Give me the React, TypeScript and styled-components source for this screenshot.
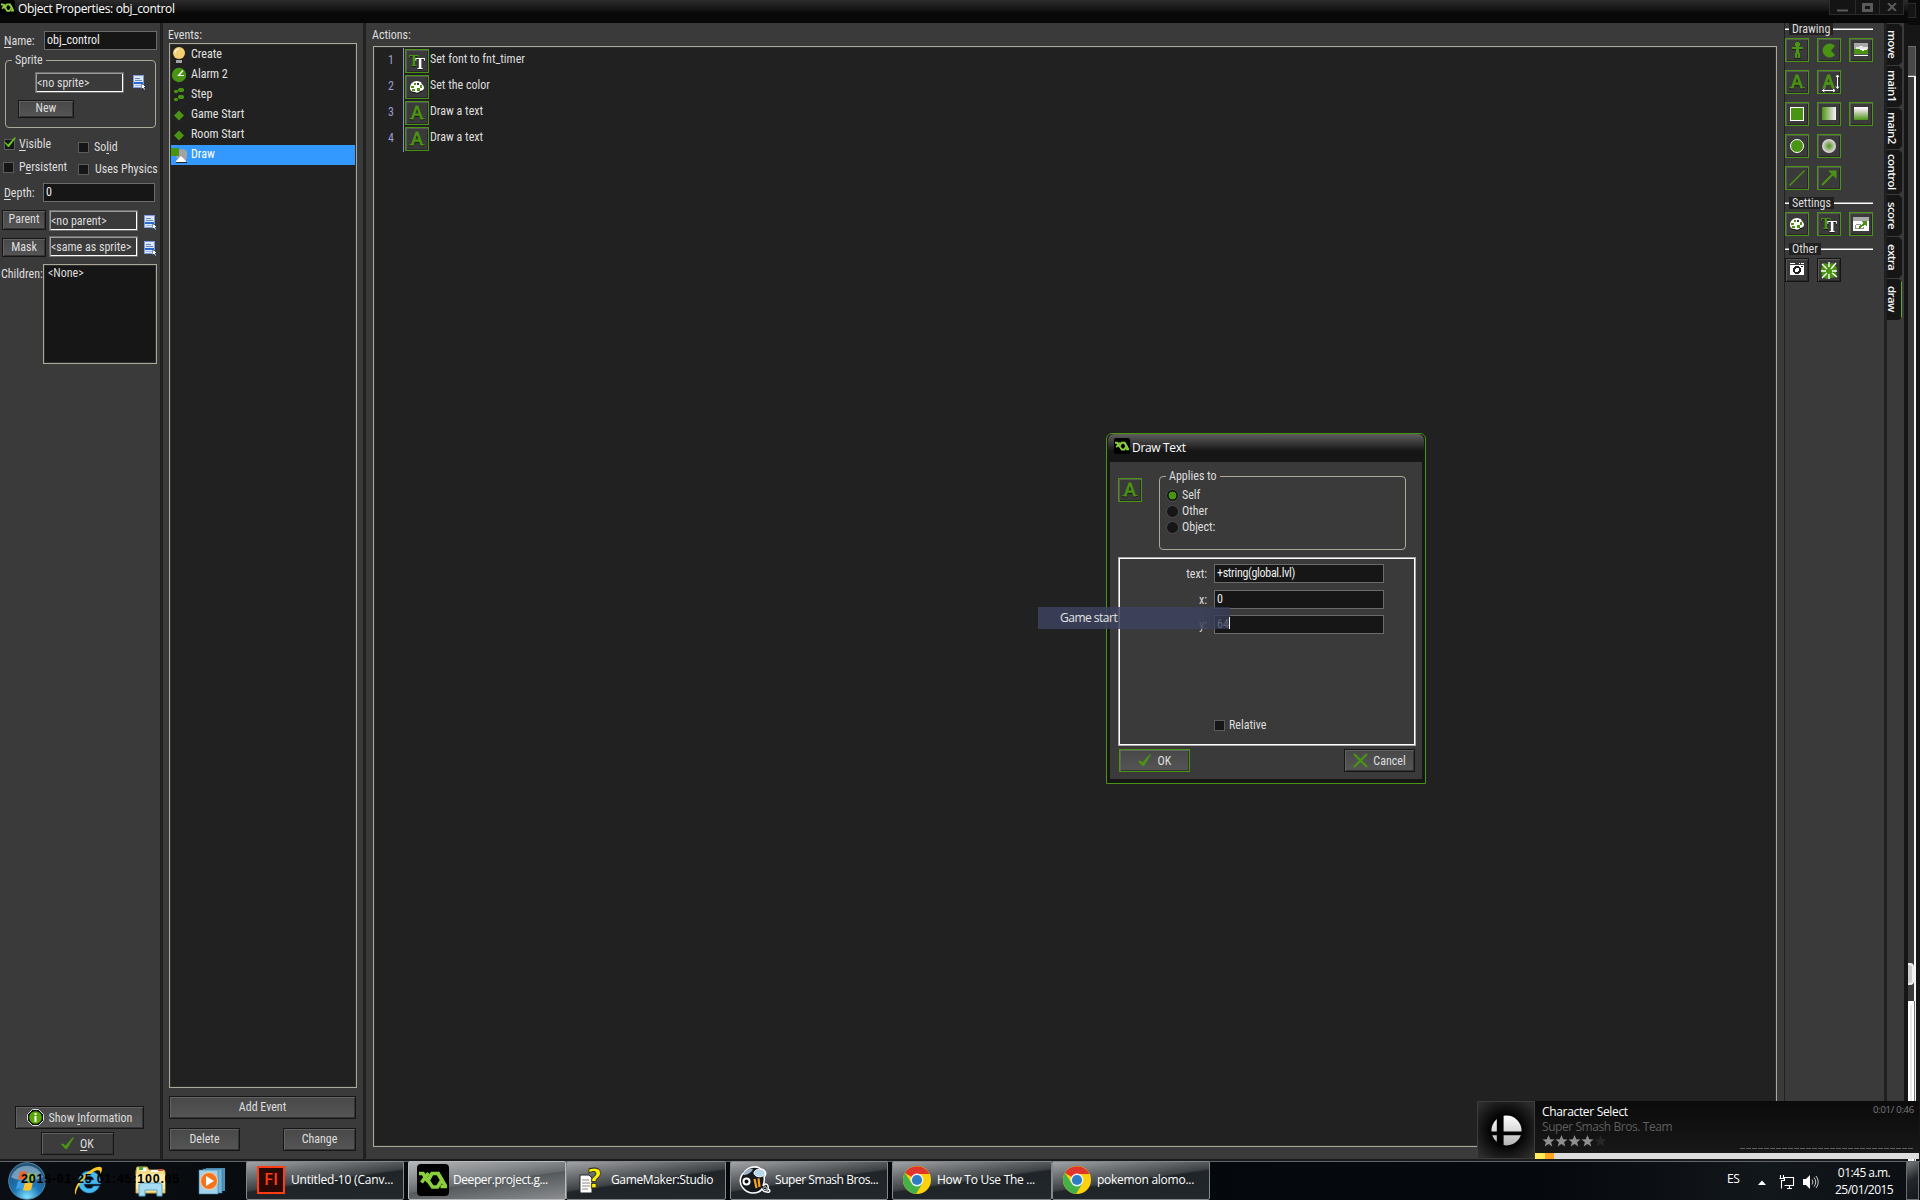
import React from 'react';
import styled, { createGlobalStyle, css } from 'styled-components';

const GREEN = '#4a9413';
const PANEL = '#3a3a3a';
const INK = '#161616';

const uiFont = css`
  font-family: Roboto, 'Liberation Sans', sans-serif;
  font-stretch: condensed;
  font-size: 12px;
  line-height: 14px;
  color: #dedede;
`;
const shellFont = css`
  font-family: 'Open Sans', 'Noto Sans', sans-serif;
  font-stretch: normal;
  font-size: 12px;
  line-height: 16px;
  letter-spacing: -0.33px;
  color: #fff;
`;

const Global = createGlobalStyle`
  * { box-sizing: border-box; }
  body { margin: 0; background: #161616; overflow: hidden; }
  svg { display: block; flex: none; }
`;

const Desktop = styled.div`
  ${uiFont}
  position: relative;
  width: 1920px;
  height: 1200px;
  display: flex;
  flex-direction: column;
  white-space: nowrap;
  overflow: hidden;
`;
const Upper = styled.div`
  display: flex;
  height: 1161px;
`;
const Window = styled.main`
  width: 1908px;
  display: flex;
  flex-direction: column;
  background: ${INK};
  padding-right: 4px;
`;
const TitleBar = styled.header`
  ${shellFont}
  height: 23px;
  margin-right: -4px;
  display: flex;
  align-items: flex-start;
  background: linear-gradient(#2c2c2c, #151515 40%, #090909 55%, #070707);
`;
const TitleText = styled.h1`
  margin: 0 0 0 3px;
  font-size: 12px;
  font-weight: 400;
  line-height: 18px;
`;
const WindowControls = styled.div`
  margin-left: auto;
  margin-right: 4px;
  display: flex;
  height: 15px;
  gap: 1px;
  background: #2b2b2b;
  border: solid #2b2b2b;
  border-width: 0 1px 1px;
`;
const ControlCell = styled.span`
  width: 23px;
  display: flex;
  align-items: center;
  justify-content: center;
  background: #141414;
  &:first-child { width: 25px; }
`;
const Body = styled.div`
  flex: 1;
  display: flex;
  border-bottom: 2px solid #1b1b1b;
`;
const Column = styled.section<{ $w?: number }>`
  ${(p) => (p.$w ? `width: ${p.$w}px;` : 'flex: 1;')}
  display: flex;
  flex-direction: column;
  background: ${PANEL};
`;
const Divider = styled.div<{ $w?: number }>`
  width: ${(p) => p.$w ?? 3}px;
  background: #202020;
`;

const Line = styled.div<{ $mt?: number; $pl?: number; $align?: string }>`
  display: flex;
  align-items: ${(p) => p.$align ?? 'center'};
  margin-top: ${(p) => p.$mt ?? 0}px;
  padding-left: ${(p) => p.$pl ?? 0}px;
`;
const Label = styled.label<{ $w: number; $right?: boolean }>`
  width: ${(p) => p.$w}px;
  text-align: ${(p) => (p.$right ? 'right' : 'left')};
  flex: none;
`;
const Key = styled.u`
  text-underline-offset: 2px;
`;
const Field = styled.div<{ $w: number }>`
  width: ${(p) => p.$w}px;
  height: 19px;
  padding: 1px 0 0 2px;
  background: ${INK};
  border: 1px solid #6b6b6b;
  color: #eee;
`;
const CallField = styled(Field)`
  letter-spacing: -0.3px;
`;
const Picker = styled.div`
  width: 89px;
  height: 21px;
  padding: 3px 0 0 1px;
  border: 1px solid #6e6e6e;
  box-shadow: inset 1px 1px #9c9c9c, inset -1px -1px #fff;
`;
const Button = styled.button<{ $w: number; $h?: number; $accent?: boolean; $flat?: boolean; $pb?: number }>`
  ${uiFont}
  width: ${(p) => p.$w}px;
  height: ${(p) => p.$h ?? 23}px;
  padding: 0 0 ${(p) => p.$pb ?? 1}px;
  display: flex;
  flex: none;
  align-items: center;
  justify-content: center;
  border: 1px solid ${(p) => (p.$accent ? GREEN : INK)};
  background: ${(p) => (p.$flat ? '#3c3c3c' : 'linear-gradient(#484848, #555)')};
  box-shadow: inset 1px 1px #626262, inset -1px -1px #333;
`;
const Group = styled.fieldset<{ $w: number; $h: number }>`
  width: ${(p) => p.$w}px;
  height: ${(p) => p.$h}px;
  margin: 0;
  padding: 0;
  min-width: 0;
  border: 1px solid #aaa899;
  border-radius: 4px;
`;
const Legend = styled.legend`
  margin-left: 6px;
  padding: 0 3px;
  height: 14px;
`;
const SpriteGroup = styled(Group)`
  margin: 3px 0 0 5px;
`;
const Checks = styled.div`
  display: flex;
  height: 47px;
`;
const CheckColumn = styled.div<{ $w: number; $pt: number; $pl: number; $gap: number }>`
  width: ${(p) => p.$w}px;
  padding: ${(p) => p.$pt}px 0 0 ${(p) => p.$pl}px;
  display: flex;
  flex-direction: column;
  gap: ${(p) => p.$gap}px;
`;
const CheckItem = styled.div<{ $gap?: number }>`
  height: 12px;
  display: flex;
  align-items: center;
  gap: ${(p) => p.$gap ?? 5}px;
`;
const Box = styled.span`
  width: 11px;
  height: 11px;
  flex: none;
  background: ${INK};
  border: 1px solid #5c5c5c;
`;
const ListBox = styled.div<{ $w?: number; $h: number; $bg?: string }>`
  ${(p) => (p.$w ? `width: ${p.$w}px;` : '')}
  height: ${(p) => p.$h}px;
  border: 1px solid #aaa899;
  background: ${(p) => p.$bg ?? '#212121'};
  padding: 1px;
  box-shadow: inset 0 0 0 1px #2e2e2e;
`;
const ChildText = styled.div`
  padding: 0 0 0 3px;
`;
const Spacer = styled.div`
  flex: 1;
`;
const Footer = styled.div`
  display: flex;
  flex-direction: column;
  gap: 3px;
  padding: 0 0 4px 15px;
`;
const OkSlot = styled.div`
  padding-left: 26px;
`;
const BtnInner = styled.span<{ $gap?: number }>`
  display: flex;
  align-items: center;
  gap: ${(p) => p.$gap ?? 5}px;
`;

const Caption = styled.div`
  height: 20px;
  padding-top: 5px;
  margin-left: -1px;
`;
const ActionsCaption = styled(Caption)`
  height: 23px;
`;
const EventsColumn = styled(Column)`
  padding: 0 6px;
`;
const EventRow = styled.div<{ $on?: boolean }>`
  height: 20px;
  display: flex;
  align-items: center;
  gap: 4px;
  color: ${(p) => (p.$on ? '#fff' : '#e2e2e2')};
  background: ${(p) => (p.$on ? '#3399ff' : 'transparent')};
`;
const EventName = styled.span`
  margin-top: -2px;
`;
const EventButtons = styled.div`
  padding: 8px 0 8px;
  display: flex;
  flex-wrap: wrap;
  justify-content: space-between;
  row-gap: 9px;
  width: 187px;
`;
const ActionsColumn = styled(Column)`
  padding: 0 7px;
`;
const ActionRow = styled.div`
  height: 26px;
  display: flex;
  align-items: flex-start;
`;
const RowNumber = styled.span`
  width: 29px;
  height: 26px;
  padding: 5px 9px 0 0;
  text-align: right;
  color: #9b9bd0;
  border-right: 1px solid #8f8fc4;
`;
const ActionText = styled.span`
  padding-left: 1px;
  margin-top: 4px;
`;
const Tile = styled.span<{ $dark?: boolean }>`
  width: 24px;
  height: 24px;
  flex: none;
  display: flex;
  align-items: center;
  justify-content: center;
  background: ${PANEL};
  border: 1px solid ${(p) => (p.$dark ? '#141414' : GREEN)};
  box-shadow: inset 1px 1px #575757, inset -1px -1px #282828;
`;
const ActionTile = styled(Tile)`
  margin: 1px 0 0 1px;
`;

const SectionHead = styled.div<{ $mt?: number }>`
  display: flex;
  align-items: center;
  height: 12px;
  width: 88px;
  margin-top: ${(p) => p.$mt ?? 0}px;
  &::before, &::after {
    content: '';
    height: 2px;
    width: 4px;
    background: linear-gradient(#999 50%, #fff 50%);
  }
  &::after { flex: 1; }
`;
const SectionName = styled.span`
  background: #202020;
  padding: 0 3px;
  height: 12px;
  line-height: 12px;
`;
const Tiles = styled.div<{ $mt: number }>`
  display: grid;
  grid-template-columns: repeat(3, 24px);
  gap: 8px;
  margin-top: ${(p) => p.$mt}px;
`;
const TileGap = styled.span``;

const TabsColumn = styled(Column)`
  padding-top: 1px;
`;
const Tab = styled.div<{ $h: number; $on?: boolean }>`
  width: 15px;
  height: ${(p) => p.$h}px;
  margin-bottom: 1px;
  writing-mode: vertical-rl;
  text-align: center;
  background: ${INK};
  border-right: ${(p) => (p.$on ? `1px solid #5cab1c` : '0')};
  clip-path: polygon(0 0, 12px 0, 100% 3px, 100% calc(100% - 3px), 12px 100%, 0 100%);
  font-family: 'Open Sans', sans-serif;
  font-stretch: normal;
  font-size: 11.5px;
  font-weight: 600;
  letter-spacing: -0.6px;
  line-height: 11px;
  padding-right: ${(p) => (p.$on ? 3 : 4)}px;
  padding-bottom: 1px;
  color: #f4f4f4;
`;

const Behind = styled.aside`
  width: 12px;
  display: flex;
  flex-direction: column;
  background: ${INK};
  padding-right: 4px;
`;
const BehindTop = styled.div`
  height: 25px;
  margin-right: -4px;
  background: #0a0a0a;
  padding: 3px 4px 7px 0;
`;
const BehindButton = styled.div`
  height: 15px;
  background: #141414;
  border: 1px solid #2b2b2b;
  border-left: 0;
`;
const BehindBar = styled.div`
  margin-top: 21px;
  height: 30px;
  background: #484848;
  border: solid #6b6b6b;
  border-width: 1px 1px 1px 0;
`;
const BehindScroll = styled.div`
  flex: 1;
  border-right: 2px solid #f4f4f4;
  border-top: 1px solid #f4f4f4;
  background: ${PANEL};
  padding-top: 886px;
`;
const BehindThumb = styled.div`
  height: 22px;
  border: 2px solid #f0f0f0;
  border-left: 0;
  border-radius: 0 4px 4px 0;
  background: #ccc;
`;
const BehindPage = styled.div`
  margin-top: 16px;
  height: 160px;
  background: #e8e8e8;
  border: solid #fff;
  border-width: 4px 2px 0;
  box-shadow: 1px 0 #77777f;
`;

/* ---- dialog ---- */
const Dialog = styled.section`
  position: absolute;
  left: 1106px;
  top: 433px;
  width: 320px;
  height: 351px;
  padding: 0 3px 4px;
  display: flex;
  flex-direction: column;
  border: 1px solid ${GREEN};
  border-radius: 6px 6px 0 0;
  background: ${INK};
`;
const DialogTitle = styled.header`
  ${shellFont}
  height: 28px;
  margin: 0 -2px;
  padding: 4px 0 0 6px;
  display: flex;
  gap: 2px;
  line-height: 20px;
  border-radius: 6px 6px 0 0;
  background: linear-gradient(#5e5e5e, #3a3a3a 30%, #161616 60%);
`;
const DialogBody = styled.div`
  flex: 1;
  background: ${PANEL};
  padding: 0 6px 0 8px;
`;
const DialogTop = styled.div`
  display: flex;
  height: 95px;
  padding-top: 7px;
  gap: 17px;
`;
const DialogTile = styled(Tile)`
  margin-top: 9px;
`;
const Radios = styled.div`
  padding: 4px 0 0 6px;
`;
const RadioRow = styled.div`
  height: 16px;
  display: flex;
  align-items: center;
  gap: 3px;
`;
const Radio = styled.span<{ $on?: boolean }>`
  width: 13px;
  height: 13px;
  border-radius: 50%;
  border: 1px solid #4d4d4d;
  background: ${(p) => (p.$on ? `radial-gradient(circle, ${GREEN} 3.6px, ${INK} 4.2px)` : INK)};
`;
const Args = styled.div`
  width: 298px;
  height: 189px;
  padding-top: 5px;
  border: 1px solid #aaa;
  outline: 1px solid #fff;
  outline-offset: -2px;
`;
const ArgRow = styled.div<{ $mb: number }>`
  display: flex;
  align-items: center;
  gap: 7px;
  padding-left: 1px;
  margin-bottom: ${(p) => p.$mb}px;
  &:first-child { margin-top: 1px; }
`;
const RelativeRow = styled(CheckItem)`
  margin: 85px 0 0 95px;
`;
const DialogButtons = styled.div`
  display: flex;
  justify-content: space-between;
  padding: 3px 1px 0;
`;
const GhostMenu = styled.div`
  ${shellFont}
  position: absolute;
  left: 1038px;
  top: 607px;
  width: 192px;
  height: 22px;
  padding-left: 22px;
  line-height: 21px;
  letter-spacing: -0.5px;
  color: #e4e4e4;
  background: linear-gradient(90deg, rgba(60, 66, 94, 0.85) 85%, rgba(54, 58, 84, 0.76));
`;
const Caret = styled.i`
  position: absolute;
  right: 0;
  top: 10px;
  width: 1px;
  height: 12px;
  background: #fff;
`;

/* ---- now playing ---- */
const Player = styled.section`
  ${shellFont}
  position: absolute;
  left: 1477px;
  top: 1101px;
  width: 442px;
  height: 58px;
  display: flex;
  background: linear-gradient(#0b0b0b, #191919);
`;
const Cover = styled.div`
  width: 58px;
  display: flex;
  align-items: center;
  justify-content: center;
  border: 1px solid #3c3c3c;
  background: radial-gradient(circle, #000 35%, #2c2c2c 90%);
`;
const Track = styled.div`
  flex: 1;
  display: flex;
  flex-direction: column;
`;
const TrackMain = styled.div`
  flex: 1;
  display: flex;
  justify-content: space-between;
  padding: 3px 5px 0 7px;
`;
const TrackTitle = styled.div`
  line-height: 15px;
`;
const TrackArtist = styled.div`
  line-height: 15px;
  letter-spacing: -0.43px;
  color: #5e5e5e;
`;
const TrackSide = styled.div`
  display: flex;
  flex-direction: column;
  justify-content: space-between;
  align-items: flex-end;
  font-size: 9.5px;
  letter-spacing: -0.25px;
  line-height: 12px;
  color: #7c7c7c;
  padding-bottom: 4px;
`;
const Progress = styled.div`
  height: 6px;
  background: linear-gradient(90deg, #ffeb5a 10px, #ffa51e 10px 19px, #dcdcdc 19px);
`;

/* ---- taskbar ---- */
const Taskbar = styled.footer`
  ${shellFont}
  position: relative;
  height: 39px;
  display: flex;
  border-top: 1px solid #5f656b;
  background: linear-gradient(90deg, #0a0d11, #05080b 30%, #05080c 80%, #12171c 92%, #0b0f13);
`;
const Launch = styled.div`
  width: 246px;
  display: flex;
  align-items: center;
  padding-left: 8px;
  gap: 22px;
`;
const TaskGroup = styled.div`
  display: flex;
  margin: -1px 4px 0 0;
`;
const TaskButton = styled.div<{ $active?: boolean; $w?: number }>`
  width: ${(p) => p.$w ?? 158}px;
  height: 39px;
  padding: 0 0 1px 8px;
  display: flex;
  align-items: center;
  gap: 4px;
  border: 1px solid ${(p) => (p.$active ? '#b9bcbe' : '#84888b')};
  border-radius: 2px;
  background: ${(p) =>
    p.$active
      ? 'linear-gradient(172deg, #b4b6b8 0, #85888a 35%, #66696c 52%, #55595c 53%, #8b8d8f 100%)'
      : 'linear-gradient(172deg, #a2a4a6 0, #6e7174 25%, #3e4245 48%, #1f2428 52%, #23282c 100%)'};
`;
const TaskIcon = styled.span`
  width: 32px;
  height: 32px;
  display: flex;
  align-items: center;
  justify-content: center;
`;
const TaskName = styled.span<{ $ls?: number }>`
  line-height: 18px;
  margin-top: -1px;
  letter-spacing: ${(p) => p.$ls ?? -0.35}px;
`;
const Flash = styled.span`
  width: 28px;
  height: 28px;
  border: 2px solid #ff3c14;
  background: #2a0804;
  color: #ff3c14;
  font: 600 17px/22px 'Open Sans', sans-serif;
  letter-spacing: 0;
  text-align: center;
`;
const Tray = styled.div`
  margin-left: auto;
  display: flex;
  align-items: center;
`;
const Lang = styled.span`
  width: 31px;
  margin-bottom: 5px;
`;
const TrayIcon = styled.span<{ $w: number }>`
  width: ${(p) => p.$w}px;
  margin-top: 2px;
`;
const Clock = styled.div`
  width: 70px;
  text-align: center;
  line-height: 17px;
  letter-spacing: -0.55px;
`;
const ShowDesktop = styled.div`
  width: 13px;
  height: 38px;
  margin-right: 1px;
  border: 1px solid #6a6d70;
  background: linear-gradient(150deg, #75787a, #24282c 45%, #14181c);
`;
const Stamp = styled.div`
  position: absolute;
  left: 21px;
  top: 9px;
  font: 700 12.5px/16px 'Liberation Sans', Arial, sans-serif;
  letter-spacing: 0.75px;
  color: #000;
`;

/* ---- drawings ---- */
const Logo = ({ s }: { s: number }) => (
  <svg width={s} height={s} viewBox="0 0 32 32">
    <rect width="32" height="32" rx="4" fill="#000" />
    <g fill="none" stroke="#8bd03c" strokeWidth="3.6">
      <path d="M2 9.5h4l5 8M11.500 9l-7 9.500" />
      <path d="M15 9.500h6l4 6.500-4.500 7h-5L11 16.500z" />
      <path d="M20.500 8.500l8 13.500M23.500 22.500h6.500" />
    </g>
  </svg>
);
const Shaded = styled.svg`
  filter: drop-shadow(0.5px 1px 0 #1a1a1a);
`;
const LetterA = () => (
  <Shaded width="22" height="22">
    <text x="11" y="17" textAnchor="middle" fontFamily="DejaVu Sans" fontSize="18.500" fill={GREEN} stroke={GREEN} strokeWidth="1">A</text>
    <path d="M3.500 16.500h4M14.500 16.500h4" stroke={GREEN} />
  </Shaded>
);
const Fonts = () => (
  <Shaded width="22" height="22">
    <text x="7.800" y="16" textAnchor="middle" fontFamily="DejaVu Serif" fontWeight="700" fontSize="14.500" fill={GREEN}>T</text>
    <text x="14" y="18.500" textAnchor="middle" fontFamily="DejaVu Serif" fontWeight="700" fontSize="14.500" fill="#fff">T</text>
  </Shaded>
);
const Palette = () => (
  <svg width="22" height="22" viewBox="0 0 22 22">
    <path d="M4 12c0-4 3-7 7-7 2 0 2 1 4 1 0 2 3 3 3 6 0 2-2 3-4 3-1 2-4 2-5 1-3 0-5-1-5-4z" fill="#111" transform="translate(0 1)" />
    <path d="M4 12c0-4 3-7 7-7 2 0 2 1 4 1 0 2 3 3 3 6 0 2-2 3-4 3-1 2-4 2-5 1-3 0-5-1-5-4z" fill="#fff" />
    <g fill={GREEN}>
      <rect x="8" y="7" width="2" height="2" /><rect x="5" y="10" width="3" height="2" />
      <rect x="6" y="13" width="3" height="2" /><rect x="11" y="12" width="3" height="3" />
      <rect x="14" y="9" width="2" height="3" />
    </g>
    <rect x="11" y="7" width="2" height="2" fill="#333" />
  </svg>
);
const Person = () => (
  <svg width="22" height="22" viewBox="0 0 22 22" shapeRendering="crispEdges">
    <path d="M10 3h3v1h1v3h-1v1h4v2h-4v4h1v5h-2v-4h-1v4H9v-5h1v-4H6V8h4V7H9V4h1z" fill={GREEN} />
    <path d="M8 19h3v1H8zM12 19h3v1h-3zM6 10h4v1H6zM13 10h4v1h-4z" fill="#1a1a1a" />
  </svg>
);
const Pac = () => (
  <svg width="22" height="22" viewBox="0 0 22 22">
    <path d="M17 7A7 7 0 1 0 17 16l-4-4.500z" fill={GREEN} />
  </svg>
);
const Landscape = () => (
  <svg width="22" height="22" viewBox="0 0 22 22" shapeRendering="crispEdges">
    <rect x="4" y="4" width="14" height="13" fill="#fff" />
    <rect x="4" y="4" width="14" height="6" fill="#a8a8a8" />
    <path d="M6 8h3V7h4v1h5v2H6z" fill="#e8e8e8" />
    <path d="M4 10h5l4 2 5-2v5H4z" fill={GREEN} />
    <rect x="4" y="15" width="14" height="1" fill="#555" />
  </svg>
);
const SizedA = () => (
  <svg width="22" height="22" viewBox="0 0 22 22">
    <text x="10.500" y="16.500" textAnchor="middle" fontFamily="DejaVu Sans" fontSize="18" fill={GREEN} stroke={GREEN} strokeWidth="1">A</text>
    <path d="M19.500 4v13M18 6l1.500-2L21 6M18 15.500l1.500 2 1.500-2M4.500 19.500h12M6.500 18l-2 1.500 2 1.500M15 18l2 1.500-2 1.500" stroke="#fff" fill="none" />
  </svg>
);
const Swatch = ({ kind }: { kind: 'solid' | 'h' | 'v' | 'circle' | 'radial' }) => (
  <svg width="22" height="22" viewBox="0 0 22 22">
    <defs>
      <linearGradient id="gh"><stop stopColor={GREEN} /><stop offset="1" stopColor="#fff0ff" /></linearGradient>
      <linearGradient id="gv" x2="0" y2="1"><stop offset=".1" stopColor="#fff0ff" /><stop offset="1" stopColor={GREEN} /></linearGradient>
      <radialGradient id="gr"><stop stopColor={GREEN} /><stop offset="1" stopColor="#e8d8e8" /></radialGradient>
    </defs>
    {kind === 'solid' && <rect x="4.500" y="4.500" width="13" height="13" fill={GREEN} stroke="#fff" />}
    {kind === 'h' && <rect x="4" y="4" width="14" height="13" fill="url(#gh)" />}
    {kind === 'v' && <rect x="4" y="4" width="14" height="13" fill="url(#gv)" />}
    {kind === 'circle' && <circle cx="11" cy="11" r="6.500" fill={GREEN} stroke="#fff" />}
    {kind === 'radial' && <circle cx="11" cy="11" r="7" fill="url(#gr)" />}
  </svg>
);
const Diagonal = () => (
  <svg width="22" height="22"><path d="M3.500 18.500l15-15" stroke={GREEN} strokeWidth="1.500" /></svg>
);
const Arrow = () => (
  <svg width="22" height="22"><path d="M4 18L15 7" stroke={GREEN} strokeWidth="2.200" /><path d="M10 3.500h8.500V12z" fill={GREEN} /></svg>
);
const Fullscreen = () => (
  <svg width="22" height="22" shapeRendering="crispEdges">
    <rect x="3" y="4" width="16" height="14" fill="#fff" />
    <rect x="3" y="4" width="16" height="4" fill="#aaa" />
    <path d="M5.500 11.500h5M5.500 11.500v4h8v-2" stroke="#999" fill="none" />
    <path d="M9 15l6-5" stroke={GREEN} strokeWidth="2" /><path d="M12 8h5v6z" fill={GREEN} />
  </svg>
);
const Camera = () => (
  <svg width="22" height="22" shapeRendering="crispEdges">
    <path d="M4 4h5v1H4zM15 4h3v1h-3zM13 4h1v1h-1z" fill="#fff" />
    <rect x="4" y="6" width="14" height="10" fill="#fff" />
    <circle cx="11" cy="11" r="3.800" fill="#222" /><circle cx="11" cy="11" r="2" fill="#fff" />
    <path d="M15 7h2v1h-2z" fill="#222" />
  </svg>
);
const Burst = () => (
  <svg width="22" height="22">
    <path d="M5 4l5 1 5-1 4 5-1 4 1 5-6 1-5 1-4-3-1-6z" fill={GREEN} />
    <path d="M11 3v5M4 5l5 5M18 4l-5 6M3 12h5M14 12h5M4 19l5-5M11 15v5M14 14l5 4" stroke="#fff" strokeWidth="1.400" />
  </svg>
);
const Tick = () => (
  <svg width="13" height="13" viewBox="0 0 13 13">
    <path d="M0 7.500l2-1 2.500 2L12 0l.8 1L6 12H4.500z" fill={GREEN} />
  </svg>
);
const CheckedBox = () => (
  <svg width="13" height="13" viewBox="0 0 13 13" overflow="visible">
    <rect x="1.500" y="1.500" width="10" height="10" fill={INK} stroke="#5c5c5c" />
    <path d="M1 4l2 .5 2 2L12-1l.8 1L6 9H5z" fill="#62c820" />
  </svg>
);
const Cross = () => (
  <svg width="15" height="15"><path d="M1 1l13 13M14 1L1 14" stroke={GREEN} strokeWidth="2.200" /></svg>
);
const Info = () => (
  <svg width="17" height="17">
    <path d="M5.500.5h6l5 5v6l-5 5h-6l-5-5v-6z" fill="#111" stroke="#ddd" />
    <circle cx="8.500" cy="8.500" r="6.300" fill="#5aa507" />
    <rect x="7.500" y="4" width="2" height="2" fill="#fff" /><rect x="7.500" y="7" width="2" height="6" fill="#fff" />
  </svg>
);
const MenuIcon = () => (
  <svg width="14" height="15" shapeRendering="crispEdges">
    <rect x=".5" y=".5" width="10" height="12" fill="#dce8f8" stroke="#7d9bdc" />
    <path d="M2 3.500h5M2 5.500h7" stroke="#6c86b4" />
    <rect x="1" y="7" width="9" height="2" fill="#2468d0" />
    <path d="M2 10.500h6" stroke="#9ab4e4" />
    <path d="M8 8v6l2-1 1 2 1-1-1-2h2z" fill="#fff" stroke="#14305c" strokeWidth=".5" />
  </svg>
);
const Bulb = () => (
  <svg width="16" height="16"><circle cx="8" cy="6" r="6" fill="#f2cf74" /><path d="M4 6a4 4 0 0 1 4-4" stroke="#fff" fill="none" /><rect x="5" y="13" width="6" height="3" fill="#a2a2a2" /></svg>
);
const AlarmIcon = () => (
  <svg width="16" height="16"><circle cx="8" cy="8" r="7.200" fill={GREEN} /><path d="M12 3.500L7.500 8.500H13" stroke="#fff" fill="none" strokeWidth="1.200" /></svg>
);
const Steps = () => (
  <svg width="16" height="16" fill={GREEN}>
    <rect x="7" y="1" width="6" height="4" rx="1.800" /><rect x="3" y="3" width="4" height="3" rx="1.200" />
    <rect x="7" y="8" width="6" height="4" rx="1.800" /><rect x="3" y="11" width="4" height="3" rx="1.200" />
  </svg>
);
const Diamond = () => (
  <svg width="16" height="16"><path d="M8 3.500l5 5-5 5-5-5z" fill={GREEN} /></svg>
);
const DrawIcon = () => (
  <svg width="16" height="18"><circle cx="11" cy="9" r="6" fill="#a3a3a3" /><rect y="2" width="8" height="8" fill={GREEN} /><path d="M10 10l5 5v2H5v-2z" fill="#fff" /><path d="M5 16.500h11" stroke="#222" /></svg>
);
const StartOrb = () => (
  <svg width="38" height="38" viewBox="0 0 38 38">
    <defs>
      <radialGradient id="orb" cx=".5" cy=".95" r=".95"><stop stopColor="#7fe6ff" /><stop offset=".4" stopColor="#1c76b8" /><stop offset="1" stopColor="#24506f" /></radialGradient>
    </defs>
    <circle cx="19" cy="19" r="18.300" fill="url(#orb)" stroke="#4f86a8" />
    <path d="M3 15a17 17 0 0 1 32 0c-8 5-24 5-32 0z" fill="#c4dcec" opacity=".5" />
    <path d="M12 10c3-1 5-1 7 0l-2 8c-2-1-4-1-7 0z" fill="#f2632a" /><path d="M20 11c3 1 5 1 8 0l-2 8c-3 1-5 1-8 0z" fill="#8fc73e" />
    <path d="M10 19c3-1 5-1 7 0l-2 8c-2-1-4-1-7 0z" fill="#3f9fe6" /><path d="M17 20c3 1 5 1 8 0l-2 8c-3 1-5 1-8 0z" fill="#fdc532" />
  </svg>
);
const Explorer = () => (
  <svg width="32" height="32" viewBox="0 0 32 32">
    <path d="M16 6a11 11 0 1 0 10.500 15h-6c-1 2-2.500 2.500-4.500 2.500-3 0-5-2-5-4.500h16.500C28 11 23 6 16 6zm-4.800 9c.5-2.500 2-4 4.800-4s4.500 1.500 5 4z" fill="#45b9f0" stroke="#1c7ec4" strokeWidth=".6" />
    <path d="M3 30C-1 26 6 13 18 5c6-4 11-4 11-1 0 2-1 4-2 5 1-4-2-5-7-2C10 13 2 24 3 30z" fill="#fcc822" />
  </svg>
);
const Folder = () => (
  <svg width="34" height="32" viewBox="0 0 34 32">
    <path d="M2 6l1-4h10l2 3h15l1 2v21H2z" fill="#f6dd8a" stroke="#c9a94e" />
    <path d="M7 3h5v3H7zM17 5h7v2h-7z" fill="#fff" /><rect x="5" y="2" width="4" height="3" fill="#3fae3a" /><rect x="24" y="4" width="5" height="2" fill="#c84f3c" />
    <path d="M2 9h29v15H2z" fill="#fbe9a6" />
    <path d="M5 31V21c0-2 1-3 3-3h17c2 0 3 1 3 3v10h-5v-6H11v6z" fill="#a5dcf2" stroke="#5aa7cc" />
  </svg>
);
const MediaPlayer = () => (
  <svg width="28" height="28" viewBox="0 0 28 28">
    <rect x="8" y="1" width="19" height="23" fill="#4c8fb8" /><rect x="5" y="2" width="19" height="24" fill="#76b4d6" stroke="#3a7ca4" strokeWidth=".6" />
    <rect x="1" y="3" width="19" height="24" fill="#a2d2ea" stroke="#3a7ca4" strokeWidth=".6" />
    <circle cx="11" cy="14" r="8.500" fill="#f4731c" stroke="#fbd0a8" /><path d="M8 9l8 5-8 5z" fill="#fff" />
  </svg>
);
const HelpDoc = () => (
  <svg width="24" height="28" viewBox="0 0 24 28">
    <path d="M1 9h9l3 3v15H1z" fill="#fff" stroke="#222" /><path d="M3 14h7M3 17h8M3 20h8M3 23h6" stroke="#888" />
    <text x="15.500" y="21.500" textAnchor="middle" fontFamily="DejaVu Sans" fontWeight="700" fontSize="26" fill="#fff200" stroke="#222" strokeWidth=".8">?</text>
  </svg>
);
const Bee = () => (
  <svg width="32" height="30" viewBox="0 0 32 30">
    <path d="M5 8C8 2 17 0 22 4c5 1 6 5 3 8 1 3 0 6-1 9 3-4 6-1 5 3 3 1 2 4-1 3-2 0-4-1-5-3-2 3-6 4-9 4C6 28 0 20 1.500 14 2 11 3 9 5 8z" fill="#15181c" stroke="#fff" strokeWidth="1.500" />
    <path d="M4 10c2-5 6-7 10-6-2 4-6 6-10 6z" fill="#9db4c8" />
    <ellipse cx="20.500" cy="8" rx="5.500" ry="3.800" fill="#b8d6ea" stroke="#fff" />
    <circle cx="7.500" cy="16.500" r="4" fill="#fff" /><circle cx="7.500" cy="16.500" r="2" fill="#111" />
    <path d="M15.500 14l2 9M19.500 13.500l1 8.500" stroke="#f7a51c" strokeWidth="2.200" />
    <path d="M24.500 23.500q2-4 3 0M25 24.500q4 0 3.500 1.500" stroke="#ddd" fill="none" />
  </svg>
);
const Chrome = () => (
  <svg width="28" height="28" viewBox="0 0 28 28">
    <circle cx="14" cy="14" r="14" fill="#fdd20c" />
    <path d="M14 14L1.900 7A14 14 0 0 1 26.500 8H14z" fill="#e0352b" />
    <path d="M14 14l5 4-6 10A14 14 0 0 1 1.900 7L8.500 17z" fill="#43b04a" />
    <circle cx="14" cy="14" r="6.400" fill="#f2f6fa" /><circle cx="14" cy="14" r="5.100" fill="#2f7cc4" />
  </svg>
);
const Smash = () => (
  <svg width="31" height="31" viewBox="0 0 32 32">
    <defs>
      <clipPath id="disc"><circle cx="16" cy="16" r="15.500" /></clipPath>
      <linearGradient id="silver" x2="0" y2="1"><stop stopColor="#fff" /><stop offset="1" stopColor="#b4b4b4" /></linearGradient>
    </defs>
    <g clipPath="url(#disc)" fill="url(#silver)">
      <path d="M0 0h6v17H0zM13 0h19v17H13zM0 21h6v11H0zM13 21h19v11H13z" />
    </g>
  </svg>
);
const Star = ({ dim }: { dim?: boolean }) => (
  <svg width="13" height="12" viewBox="0 0 13 12">
    <path d="M6.500 0l1.700 4.200 4.300.2-3.400 2.800 1.200 4.300-3.800-2.400-3.800 2.400 1.200-4.300L.5 4.400l4.300-.2z" fill={dim ? '#262626' : '#8f8f8f'} />
  </svg>
);
const Stars = styled.div`
  display: flex;
  padding-top: 1px;
`;
const Network = () => (
  <svg width="16" height="15" fill="none" stroke="#fff">
    <path d="M1.500 0v4M4.500 0v4M.5 3.500h5v2h-3v8M5 2.500h9.500v8h-9M8 13.500h5M10.500 10v3" strokeWidth="1.100" />
  </svg>
);
const Speaker = () => (
  <svg width="16" height="14"><path d="M0 4h3l4-4v14L3 10H0z" fill="#fff" /><path d="M9 4.500q2 2.500 0 5M11 2.500q3.500 4.500 0 9M13 1q4.500 6 0 12" stroke="#ccc" fill="none" /></svg>
);

const events: [string, React.ReactNode][] = [
  ['Create', <Bulb />],
  ['Alarm 2', <AlarmIcon />],
  ['Step', <Steps />],
  ['Game Start', <Diamond />],
  ['Room Start', <Diamond />],
  ['Draw', <DrawIcon />],
];
const actions: [string, React.ReactNode][] = [
  ['Set font to fnt_timer', <Fonts />],
  ['Set the color', <Palette />],
  ['Draw a text', <LetterA />],
  ['Draw a text', <LetterA />],
];
const drawingTiles: React.ReactNode[] = [
  <Person />, <Pac />, <Landscape />,
  <LetterA />, <SizedA />, null,
  <Swatch kind="solid" />, <Swatch kind="h" />, <Swatch kind="v" />,
  <Swatch kind="circle" />, <Swatch kind="radial" />, null,
  <Diagonal />, <Arrow />,
];
const tabs: [string, number][] = [
  ['move', 41], ['main1', 41], ['main2', 41], ['control', 44], ['score', 41], ['extra', 41], ['draw', 41],
];

export default function App() {
  return (
    <Desktop>
      <Global />
      <Upper>
        <Window>
          <TitleBar>
            <Logo s={15} />
            <TitleText>Object Properties: obj_control</TitleText>
            <WindowControls>
              <ControlCell><svg width="11" height="10"><path d="M0 8.500h11" stroke="#5a5a5a" strokeWidth="2" /></svg></ControlCell>
              <ControlCell><svg width="11" height="9"><rect x="1.500" y="1.500" width="8" height="6" fill="none" stroke="#5a5a5a" strokeWidth="3" /></svg></ControlCell>
              <ControlCell><svg width="10" height="8"><path d="M1 0l8 8M9 0L1 8" stroke="#5a5a5a" strokeWidth="2" /></svg></ControlCell>
            </WindowControls>
          </TitleBar>
          <Body>
            <Column $w={160}>
              <Line $mt={8} $pl={4}>
                <Label $w={40}><Key>N</Key>ame:</Label>
                <Field $w={113}>obj_control</Field>
              </Line>
              <SpriteGroup $w={151} $h={75}>
                <Legend>Sprite</Legend>
                <Line $mt={5} $pl={29}>
                  <Picker>&lt;no sprite&gt;</Picker>
                  <Line $pl={9}><MenuIcon /></Line>
                </Line>
                <Line $mt={7} $pl={12}><Button $w={56} $h={18} $pb={2}>New</Button></Line>
              </SpriteGroup>
              <Checks>
                <CheckColumn $w={78} $pt={10} $pl={3} $gap={11}>
                  <CheckItem $gap={3}><CheckedBox /><span><Key>V</Key>isible</span></CheckItem>
                  <CheckItem><Box /><span>P<Key>e</Key>rsistent</span></CheckItem>
                </CheckColumn>
                <CheckColumn $w={82} $pt={13} $pl={0} $gap={10}>
                  <CheckItem><Box /><span>So<Key>l</Key>id</span></CheckItem>
                  <CheckItem $gap={6}><Box /><span>Uses Physics</span></CheckItem>
                </CheckColumn>
              </Checks>
              <Line $mt={8} $pl={4}>
                <Label $w={39}><Key>D</Key>epth:</Label>
                <Field $w={112}>0</Field>
              </Line>
              <Line $mt={8} $pl={2} $align="flex-start">
                <Button $w={44} $h={20} $pb={3}>Parent</Button>
                <Line $pl={3} $align="flex-start"><Picker>&lt;no parent&gt;</Picker></Line>
                <Line $mt={5} $pl={6}><MenuIcon /></Line>
              </Line>
              <Line $mt={5} $pl={2} $align="flex-start">
                <Line $mt={2}><Button $w={44} $h={19}>Mask</Button></Line>
                <Line $pl={3} $align="flex-start"><Picker>&lt;same as sprite&gt;</Picker></Line>
                <Line $mt={5} $pl={6}><MenuIcon /></Line>
              </Line>
              <Line $mt={7} $pl={1} $align="flex-start">
                <Line $mt={3}><Label $w={42}>Children:</Label></Line>
                <ListBox $w={114} $h={100} $bg={INK}><ChildText>&lt;None&gt;</ChildText></ListBox>
              </Line>
              <Spacer />
              <Footer>
                <Button $w={129} $pb={0}><BtnInner><Info /><span>Show <Key>I</Key>nformation</span></BtnInner></Button>
                <OkSlot><Button $w={73} $flat $pb={0}><BtnInner $gap={6}><Tick /><span><Key>O</Key>K</span></BtnInner></Button></OkSlot>
              </Footer>
            </Column>
            <Divider />
            <EventsColumn $w={200}>
              <Caption>Events:</Caption>
              <ListBox $w={188} $h={1045}>
                {events.map(([name, icon]) => (
                  <EventRow key={name} $on={name === 'Draw'}>{icon}<EventName>{name}</EventName></EventRow>
                ))}
              </ListBox>
              <EventButtons>
                <Button $w={187} $pb={2}>Add Event</Button>
                <Button $w={71} $pb={2}>Delete</Button>
                <Button $w={73} $pb={2}>Change</Button>
              </EventButtons>
            </EventsColumn>
            <Divider />
            <ActionsColumn>
              <ActionsCaption>Actions:</ActionsCaption>
              <ListBox $h={1101}>
                {actions.map(([name, icon], i) => (
                  <ActionRow key={i}>
                    <RowNumber>{i + 1}</RowNumber>
                    <ActionTile>{icon}</ActionTile>
                    <ActionText>{name}</ActionText>
                  </ActionRow>
                ))}
              </ListBox>
            </ActionsColumn>
            <Divider $w={1} />
            <Column $w={99}>
              <SectionHead><SectionName>Drawing</SectionName></SectionHead>
              <Tiles $mt={3}>
                {drawingTiles.map((t, i) => (t ? <Tile key={i}>{t}</Tile> : <TileGap key={i} />))}
              </Tiles>
              <SectionHead $mt={7}><SectionName>Settings</SectionName></SectionHead>
              <Tiles $mt={3}>
                <Tile><Palette /></Tile>
                <Tile><Fonts /></Tile>
                <Tile><Fullscreen /></Tile>
              </Tiles>
              <SectionHead $mt={7}><SectionName>Other</SectionName></SectionHead>
              <Tiles $mt={3}>
                <Tile $dark><Camera /></Tile>
                <Tile $dark><Burst /></Tile>
              </Tiles>
            </Column>
            <Divider />
            <TabsColumn $w={17}>
              {tabs.map(([name, h]) => <Tab key={name} $h={h} $on={name === 'draw'}>{name}</Tab>)}
            </TabsColumn>
          </Body>
        </Window>
        <Behind>
          <BehindTop><BehindButton /></BehindTop>
          <BehindBar />
          <BehindScroll><BehindThumb /><BehindPage /></BehindScroll>
        </Behind>
      </Upper>

      <Taskbar>
        <Launch>
          <StartOrb />
          <Line $pl={5}><Explorer /></Line>
          <Line $pl={7}><Folder /></Line>
          <Line $pl={8}><MediaPlayer /></Line>
        </Launch>
        <TaskGroup>
          <TaskButton><TaskIcon><Flash>Fl</Flash></TaskIcon><TaskName $ls={-0.2}>Untitled-10 (Canv...</TaskName></TaskButton>
        </TaskGroup>
        <TaskGroup>
          <TaskButton $active><TaskIcon><Logo s={32} /></TaskIcon><TaskName $ls={-0.42}>Deeper.project.g...</TaskName></TaskButton>
          <TaskButton $w={160}><TaskIcon><HelpDoc /></TaskIcon><TaskName>GameMaker:Studio</TaskName></TaskButton>
        </TaskGroup>
        <TaskGroup>
          <TaskButton><TaskIcon><Bee /></TaskIcon><TaskName $ls={-0.45}>Super Smash Bros...</TaskName></TaskButton>
        </TaskGroup>
        <TaskGroup>
          <TaskButton $w={160}><TaskIcon><Chrome /></TaskIcon><TaskName $ls={-0.28}>How To Use The ...</TaskName></TaskButton>
          <TaskButton $w={158}><TaskIcon><Chrome /></TaskIcon><TaskName $ls={-0.25}>pokemon alomo...</TaskName></TaskButton>
        </TaskGroup>
        <Tray>
          <Lang>ES</Lang>
          <TrayIcon $w={21}><svg width="8" height="5"><path d="M0 5l4-4.500L8 5z" fill="#fff" /></svg></TrayIcon>
          <TrayIcon $w={24}><Network /></TrayIcon>
          <TrayIcon $w={26}><Speaker /></TrayIcon>
          <Clock>01:45 a.m.<br />25/01/2015</Clock>
          <Line $pl={7}><ShowDesktop /></Line>
        </Tray>
        <Stamp>2015-01-25 01:45:100.05</Stamp>
      </Taskbar>

      <Dialog>
        <DialogTitle><Logo s={16} />Draw Text</DialogTitle>
        <DialogBody>
          <DialogTop>
            <DialogTile><LetterA /></DialogTile>
            <Group $w={247} $h={81}>
              <Legend>Applies to</Legend>
              <Radios>
                <RadioRow><Radio $on />Self</RadioRow>
                <RadioRow><Radio />Other</RadioRow>
                <RadioRow><Radio />Object:</RadioRow>
              </Radios>
            </Group>
          </DialogTop>
          <Args>
            <ArgRow $mb={7}><Label $w={87} $right>text:</Label><CallField $w={170}>+string(global.lvl)</CallField></ArgRow>
            <ArgRow $mb={6}><Label $w={87} $right>x:</Label><Field $w={170}>0</Field></ArgRow>
            <ArgRow $mb={0}><Label $w={87} $right>y:</Label><Field $w={170}>64</Field></ArgRow>
            <RelativeRow $gap={4}><Box />Relative</RelativeRow>
          </Args>
          <DialogButtons>
            <Button $w={71} $accent $pb={0}><BtnInner $gap={7}><Tick />OK</BtnInner></Button>
            <Button $w={71} $pb={0}><BtnInner><Cross />Cancel</BtnInner></Button>
          </DialogButtons>
        </DialogBody>
      </Dialog>
      <GhostMenu>Game start<Caret /></GhostMenu>

      <Player>
        <Cover><Smash /></Cover>
        <Track>
          <TrackMain>
            <div>
              <TrackTitle>Character Select</TrackTitle>
              <TrackArtist>Super Smash Bros. Team</TrackArtist>
              <Stars><Star /><Star /><Star /><Star /><Star dim /></Stars>
            </div>
            <TrackSide>
              0:01/ 0:46
              <svg width="174" height="1"><path d="M0 .5h174" stroke="#606060" strokeDasharray="5 1" /></svg>
            </TrackSide>
          </TrackMain>
          <Progress />
        </Track>
      </Player>
    </Desktop>
  );
}
